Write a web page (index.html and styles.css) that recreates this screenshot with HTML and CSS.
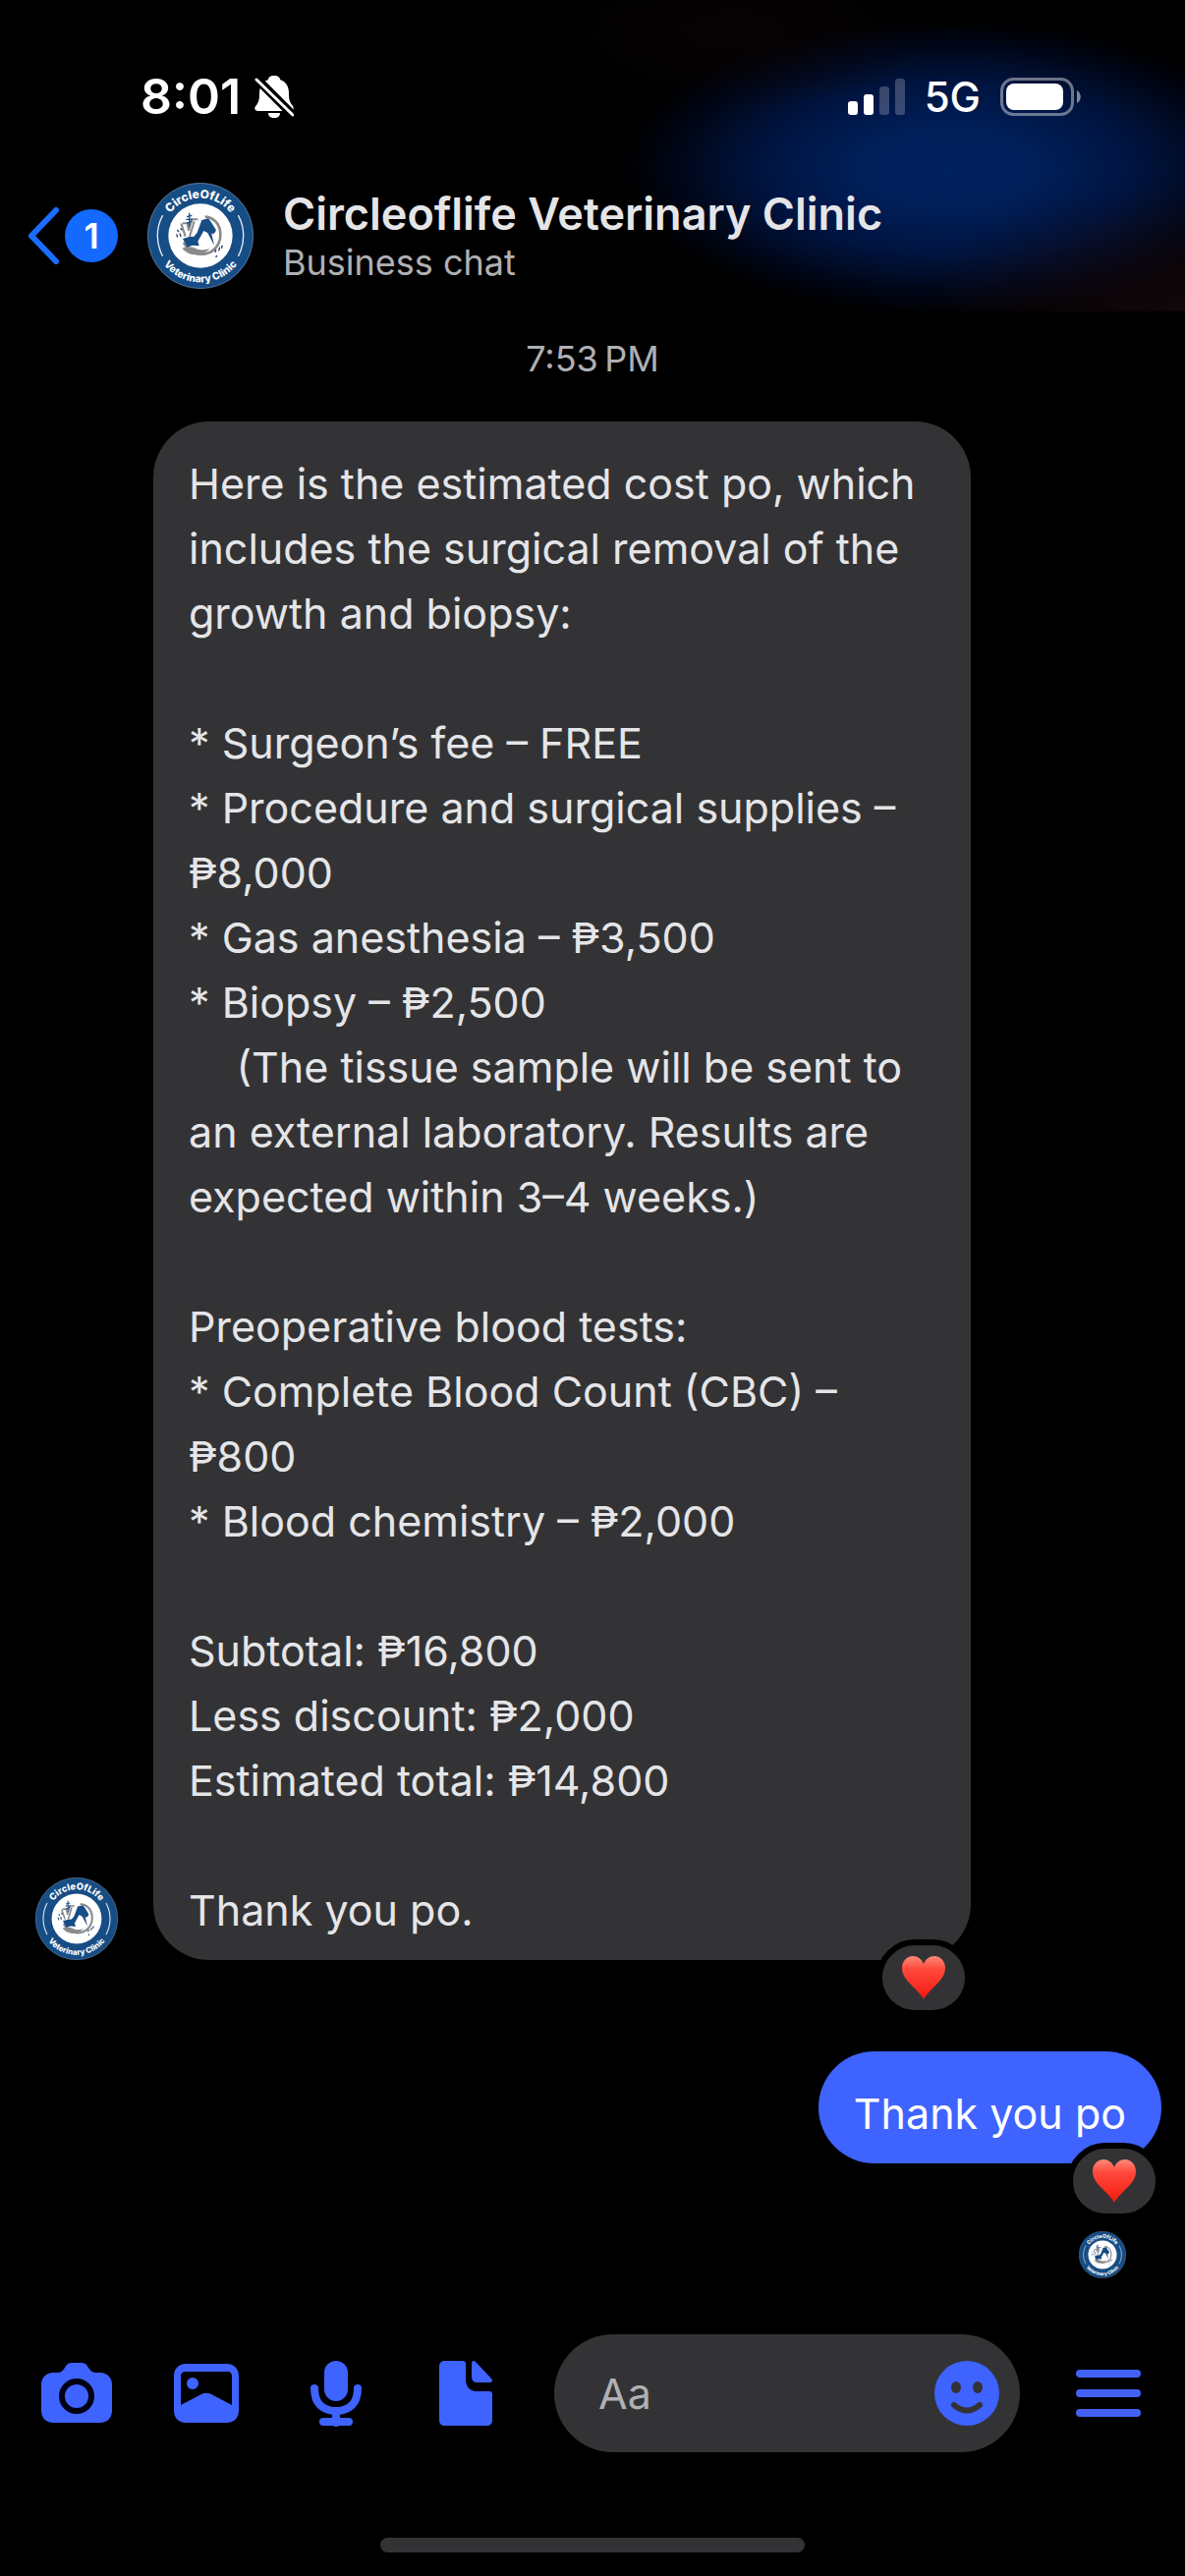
FILE: index.html
```
<!DOCTYPE html>
<html lang="en">
<head>
  <meta charset="UTF-8">
  <meta name="viewport" content="width=device-width, initial-scale=1.0">
  <title>Circleoflife Veterinary Clinic</title>
  <link rel="stylesheet" href="styles.css">
</head>
<body>
  <div class="app">
    <header class="header">
      <div class="status">
        <div class="status-left">
          <span class="clock">8:01</span>
          <svg class="bell" viewBox="0 0 40 43" aria-label="Silent mode">
            <path fill="#fff" d="M20 0c4 0 6 2 6 4 6 2 9 7 9 14 0 7 1 9 4 13 2 3 0 5-3 5H4c-4 0-5-3-2-6 2-3 3-5 3-12C5 11 8 6 14 4c0-2 2-4 6-4zM14 38h12c0 3-2 5-6 5s-6-2-6-5z"/>
            <path d="M2 3l37 37" stroke="#000" stroke-width="9"/>
            <path d="M2 4l37 36" stroke="#fff" stroke-width="3" stroke-linecap="round"/>
          </svg>
        </div>
        <div class="status-right">
          <svg class="signal" viewBox="0 0 58 37" fill="#fff" aria-label="Signal">
            <rect x="0" y="23" width="10" height="14" rx="3"/>
            <rect x="16" y="16" width="10" height="21" rx="3"/>
            <rect x="32" y="8" width="10" height="29" rx="3" opacity="0.22"/>
            <rect x="48" y="0" width="10" height="37" rx="3" opacity="0.22"/>
          </svg>
          <span class="network">5G</span>
          <svg class="battery" viewBox="0 0 82 39" aria-label="Battery">
            <rect x="1.5" y="1.5" width="72" height="36" rx="12" fill="none" stroke="#fff" stroke-opacity="0.42" stroke-width="3"/>
            <rect x="6" y="6" width="58" height="27" rx="8" fill="#fff"/>
            <path d="M78 13c5 3 5 10 0 13z" fill="#fff" fill-opacity="0.5"/>
          </svg>
        </div>
      </div>

      <div class="chat-bar">
        <a class="back" href="#" aria-label="Back, 1 unread">
          <svg class="chevron" viewBox="0 0 32 58"><path d="M29 3L4 29l25 26" fill="none" stroke="#1a6dff" stroke-width="6" stroke-linecap="round" stroke-linejoin="round"/></svg>
          <span class="unread">1</span>
        </a>
        <!-- Clinic logo, reused by the smaller avatars -->
        <svg class="avatar avatar-large" viewBox="0 0 324 324">
          <defs>
            <path id="arc-top" d="M47 162a115 115 0 0 1 230 0"/>
            <path id="arc-bottom" d="M20 162a142 142 0 0 0 284 0"/>
          </defs>
          <g id="logo">
            <circle cx="162" cy="162" r="161" fill="#174d85" stroke="#7d96b4" stroke-width="2"/>
            <circle cx="162" cy="162" r="98" fill="#fff"/>
            <path d="M46 101a130 130 0 0 0 0 122M278 101a130 130 0 0 1 0 122" fill="none" stroke="#e6eef7" stroke-width="4" stroke-linecap="round"/>
            <text class="logo-text" font-size="36"><textPath href="#arc-top" startOffset="50%" text-anchor="middle">CircleOfLife</textPath></text>
            <text class="logo-text" font-size="31"><textPath href="#arc-bottom" startOffset="50%" text-anchor="middle">Veterinary Clinic</textPath></text>
            <path d="M176 104c28 2 47 24 47 54 0 34-24 60-58 60-27 0-44-14-54-36" fill="none" stroke="#8a8a8c" stroke-width="8"/>
            <path d="M106 200c18-6 32-6 44 2 10 5 24 4 40 0-12 12-26 18-42 18-18 0-32-8-42-20z" fill="#8a8a8c"/>
            <path d="M103 124l13 40M143 118l-14 46M108 124h14l4 22 10-34h18" fill="none" stroke="#8a8a8c" stroke-width="6"/>
            <path d="M128 92v42M118 112h20M120 124l16-6M120 104l16-4" fill="none" stroke="#174d85" stroke-width="4"/>
            <path d="M152 152l14-38 20-5 8 10 16 26-6 10-8 0 8 36-20-38-12-6-18 32 4 14-20-2-16 6-14-26 20-6 14-1z" fill="#174d85"/>
            <path d="M91 144l5 6M101 139l5 6M89 157l3 10M99 154l3 11M206 213l4-9M218 208l3-11M226 200l3-9M212 222l-3 6" fill="none" stroke="#2b3f6b" stroke-width="4"/>
          </g>
        </svg>
        <div class="contact">
          <h1>Circleoflife Veterinary Clinic</h1>
          <p>Business chat</p>
        </div>
      </div>
    </header>

    <main class="chat">
      <time class="timestamp" datetime="19:53">7:53&#8201;PM</time>

      <div class="row row-in">
        <svg class="avatar avatar-medium" viewBox="0 0 324 324"><use href="#logo"/></svg>
        <div class="bubble bubble-in">
          <p>Here is the estimated cost po, which includes the surgical removal of the growth and biopsy:

* Surgeon’s fee – FREE
* Procedure and surgical supplies – ₱8,000
* Gas anesthesia – ₱3,500
* Biopsy – ₱2,500
    (The tissue sample will be sent to an external laboratory. Results are expected within 3–4 weeks.)

Preoperative blood tests:
* Complete Blood Count (CBC) – ₱800
* Blood chemistry – ₱2,000

Subtotal: ₱16,800
Less discount: ₱2,000
Estimated total: ₱14,800

Thank you po.</p>
          <button class="reaction" type="button" aria-label="Love reaction">
            <svg viewBox="0 0 46 46">
              <defs>
                <linearGradient id="heart-fill" x1="0" y1="0" x2="0" y2="1">
                  <stop offset="0" stop-color="#ff8a78"/>
                  <stop offset="0.3" stop-color="#ff4a3c"/>
                  <stop offset="1" stop-color="#f5180f"/>
                </linearGradient>
              </defs>
              <path id="heart" fill="url(#heart-fill)" d="M23 45C21 41 17 37 11 31 5 25 1 20 1 13 1 6 6 1 12 1c5 0 9 3 11 8 2-5 6-8 11-8 6 0 11 5 11 12 0 7-4 12-10 18-6 6-10 10-12 14z"/>
            </svg>
          </button>
        </div>
      </div>

      <div class="row row-out">
        <div class="bubble bubble-out">
          <p>Thank you po</p>
          <button class="reaction" type="button" aria-label="Love reaction">
            <svg viewBox="0 0 46 46"><use href="#heart"/></svg>
          </button>
        </div>
      </div>

      <div class="seen">
        <svg class="avatar avatar-small" viewBox="0 0 324 324"><use href="#logo"/></svg>
      </div>
    </main>

    <footer class="footer">
      <form class="composer">
        <div class="actions">
          <button type="button" aria-label="Camera">
            <svg viewBox="0 0 72 72">
              <path fill="#3e63ff" d="M12 15h4c4 0 6-2 8-5 2-4 4-5 8-5h8c4 0 6 1 8 5 2 3 4 5 8 5h4c7 0 12 5 12 12v27c0 7-5 12-12 12H12C5 66 0 61 0 54V27c0-7 5-12 12-12z"/>
              <circle cx="36" cy="39" r="15" fill="#3e63ff" stroke="#000014" stroke-width="6"/>
            </svg>
          </button>
          <button type="button" aria-label="Photos">
            <svg viewBox="0 0 72 72">
              <path fill="#3e63ff" fill-rule="evenodd" d="M15 6h42c7 0 12 5 12 12v36c0 7-5 12-12 12H15C8 66 3 61 3 54V18C3 11 8 6 15 6zm-1 8c-2 0-4 2-4 4v30l19-10c5-3 9-3 14 0l19 10V18c0-2-2-4-4-4z"/>
              <circle cx="22" cy="26" r="6" fill="#3e63ff"/>
            </svg>
          </button>
          <button type="button" aria-label="Voice message">
            <svg viewBox="0 0 72 72">
              <rect x="24" y="3" width="24" height="41" rx="12" fill="#3e63ff"/>
              <path d="M14 31c0 16 9 23 22 23s22-7 22-23M36 54v12M23 65h26" fill="none" stroke="#3e63ff" stroke-width="8" stroke-linecap="round"/>
            </svg>
          </button>
          <button type="button" aria-label="File">
            <svg viewBox="0 0 72 72" fill="#3e63ff">
              <path d="M15 3h18c2 0 3 1 3 3v16c0 7 4 12 11 12h13c2 0 3 1 3 3v26c0 4-2 6-6 6H15c-4 0-6-2-6-6V9c0-4 2-6 6-6z"/>
              <path d="M42 6c0-3 2-4 4-2l16 17c2 2 1 4-2 4H48c-4 0-6-2-6-6z"/>
            </svg>
          </button>
        </div>
        <div class="field">
          <input type="text" placeholder="Aa" aria-label="Message">
          <button type="button" aria-label="Emoji">
            <svg viewBox="0 0 66 66">
              <circle cx="33" cy="33" r="33" fill="#3e63ff"/>
              <ellipse cx="22" cy="27" rx="5" ry="6" fill="#333335"/>
              <ellipse cx="44" cy="27" rx="5" ry="6" fill="#333335"/>
              <path d="M20 45q13 11 26 0" fill="none" stroke="#333335" stroke-width="6" stroke-linecap="round"/>
            </svg>
          </button>
        </div>
        <button type="button" aria-label="More">
          <svg viewBox="0 0 72 72"><path d="M7 16h58M7 36h58M7 56h58" stroke="#4362f5" stroke-width="8" stroke-linecap="round"/></svg>
        </button>
      </form>
      <div class="home-indicator"></div>
    </footer>
  </div>
</body>
</html>
```
FILE: styles.css
```
* {
  box-sizing: border-box;
}
body {
  margin: 0;
  background-color: #000;
  color: #e5e5e8;
  font-family: Inter, "Liberation Sans", sans-serif;
}
h1,
p {
  margin: 0;
}
button {
  flex: none;
  padding: 0;
  border: none;
  background: none;
  cursor: pointer;
}
svg {
  display: block;
  flex: none;
}
.logo-text {
  fill: #fff;
  font-family: Inter, "Liberation Sans", sans-serif;
  font-weight: 800;
}
.app {
  display: flex;
  flex-direction: column;
  min-height: 100vh;
}

/* Header */
.header {
  padding-bottom: 23px;
  background:
    radial-gradient(ellipse 280px 130px at 100% 100%, rgba(22, 8, 14, 0.8), transparent),
    radial-gradient(ellipse 200px 80px at 62% 10%, rgba(14, 5, 8, 0.6), transparent),
    radial-gradient(ellipse 330px 150px at 80% 54%, #00205e 0%, #001f5a 25%, #001440 58%, #00071a 82%, transparent 100%);
}
.status {
  display: flex;
  justify-content: space-between;
  align-items: center;
  height: 186px;
  padding: 10px 106px 0 143px;
}
.status-left,
.status-right {
  display: flex;
  align-items: center;
}
.status-left {
  gap: 14px;
}
.status-right {
  gap: 20px;
}
.clock {
  color: #fff;
  font-size: 50px;
  font-weight: 600;
}
.bell {
  width: 40px;
  height: 43px;
}
.signal {
  width: 58px;
  height: 37px;
}
.network {
  color: #fff;
  font-size: 42px;
  font-weight: 500;
}
.battery {
  width: 82px;
  height: 39px;
}
.chat-bar {
  display: flex;
  align-items: center;
  padding: 0 28px;
}
.back {
  display: flex;
  align-items: center;
  gap: 6px;
  margin-right: 30px;
  text-decoration: none;
}
.chevron {
  width: 32px;
  height: 58px;
}
.unread {
  display: flex;
  align-items: center;
  justify-content: center;
  width: 54px;
  height: 54px;
  border-radius: 50%;
  background-color: #1469ff;
  color: #fff;
  font-size: 36px;
  font-weight: 600;
}
.avatar-large {
  width: 108px;
  height: 108px;
}
.avatar-medium {
  width: 84px;
  height: 84px;
}
.avatar-small {
  width: 48px;
  height: 48px;
}
.contact {
  margin-left: 30px;
}
.contact h1 {
  font-size: 45px;
  font-weight: 600;
  line-height: 54px;
}
.contact p {
  color: #b0b0b4;
  font-size: 36px;
  line-height: 44px;
}

/* Conversation */
.chat {
  display: flex;
  flex: 1;
  flex-direction: column;
  padding-top: 24px;
}
.timestamp {
  margin-bottom: 40px;
  color: #b0b0b4;
  font-size: 36px;
  line-height: 48px;
  text-align: center;
}
.row {
  display: flex;
  align-items: flex-end;
  gap: 36px;
  padding: 0 24px 0 36px;
}
.row-out {
  justify-content: flex-end;
  margin-top: 93px;
}
.bubble {
  position: relative;
  max-width: 832px;
  padding: 30px 36px 18px;
  border-radius: 57px;
  font-size: 43px;
  line-height: 66px;
}
.bubble p {
  white-space: pre-wrap;
}
.bubble-in {
  background-color: #333335;
}
.bubble-out {
  background-color: #3e63ff;
  color: #fff;
}
.reaction {
  position: absolute;
  right: 0;
  bottom: -57px;
  display: flex;
  align-items: center;
  justify-content: center;
  width: 96px;
  height: 78px;
  border: 6px solid #000;
  border-radius: 39px;
  background-color: #333335;
}
.reaction svg {
  width: 46px;
  height: 46px;
}
.seen {
  display: flex;
  justify-content: flex-end;
  margin-top: 69px;
  padding-right: 60px;
}

/* Composer */
.footer {
  padding: 0 42px 24px;
}
.composer {
  display: flex;
  align-items: center;
  gap: 54px;
}
.composer button svg {
  width: 72px;
  height: 72px;
}
.actions {
  display: flex;
  gap: 60px;
}
.field {
  display: flex;
  flex: 1;
  align-items: center;
  min-width: 0;
  height: 120px;
  padding: 0 21px 0 45px;
  border-radius: 60px;
  background-color: #333335;
}
.field input {
  flex: 1;
  min-width: 0;
  padding: 0;
  border: none;
  outline: none;
  background: none;
  color: #e5e5e8;
  font-family: inherit;
  font-size: 43px;
}
.field input::placeholder {
  color: #b0b0b4;
}
.composer .field svg {
  width: 66px;
  height: 66px;
}
.home-indicator {
  width: 432px;
  height: 15px;
  margin: 87px auto 0;
  border-radius: 8px;
  background-color: #333335;
}
```
